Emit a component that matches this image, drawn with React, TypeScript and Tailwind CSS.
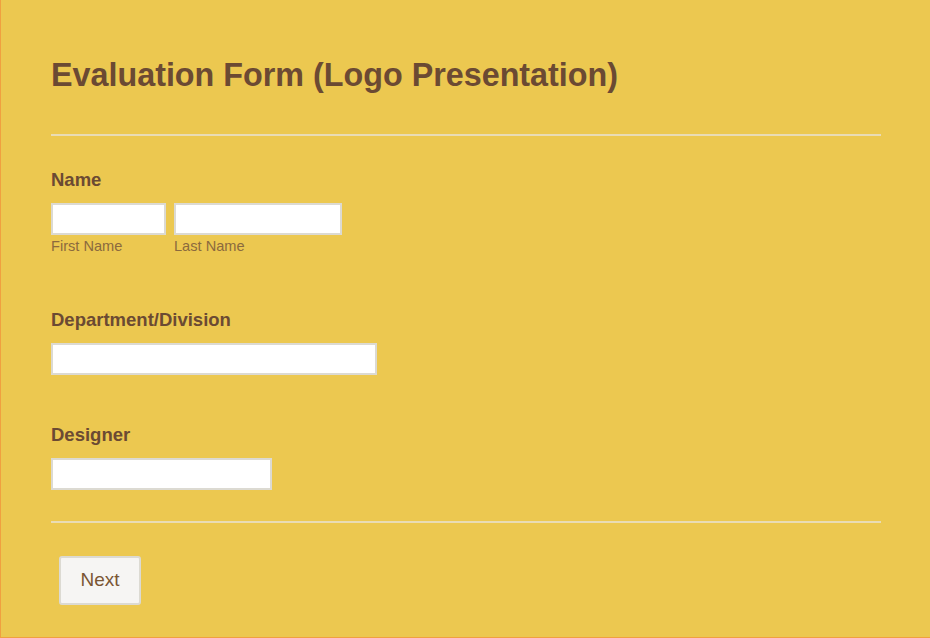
const Field = ({ label, children }: { label: string; children: React.ReactNode }) => (
  <div>
    <div className="text-[18.5px] font-bold text-[#6b4a33] leading-[18px]">{label}</div>
    <div className="mt-[14px]">{children}</div>
  </div>
);

const Box = ({ w }: { w: string }) => (
  <div className={`${w} h-[32px] bg-white border-2 border-[#dcdad2]`} />
);

export default function App() {
  return (
    <div className="w-[930px] h-[638px] bg-[#ecc850] border-l border-b border-[#f0a040] font-['Liberation_Sans',Arial,sans-serif]">
      <div className="pl-[50px] pr-[49px] pt-[58px]">
        <h1 className="text-[32.3px] font-bold text-[#6b4a33] leading-[34px]">Evaluation Form (Logo Presentation)</h1>
        <div className="mt-[42px] h-[2px] bg-[#e9dcb5]" />

        <div className="mt-[35px]">
          <Field label="Name">
            <div className="flex gap-[8px]">
              <div>
                <Box w="w-[115px]" />
                <div className="mt-[4px] text-[14.6px] text-[#8b6a3e] leading-[15px]">First Name</div>
              </div>
              <div>
                <Box w="w-[168px]" />
                <div className="mt-[4px] text-[14.6px] text-[#8b6a3e] leading-[15px]">Last Name</div>
              </div>
            </div>
          </Field>
        </div>

        <div className="mt-[57px]">
          <Field label="Department/Division">
            <Box w="w-[326px]" />
          </Field>
        </div>

        <div className="mt-[51px]">
          <Field label="Designer">
            <Box w="w-[221px]" />
          </Field>
        </div>

        <div className="mt-[31px] h-[2px] bg-[#e9dcb5]" />

        <button className="ml-[8px] mt-[33px] w-[82px] h-[49px] bg-[#f6f5f3] border-2 border-[#dcdad2] rounded-[3px] text-[19px] text-[#7a5633]">
          Next
        </button>
      </div>
    </div>
  );
}
